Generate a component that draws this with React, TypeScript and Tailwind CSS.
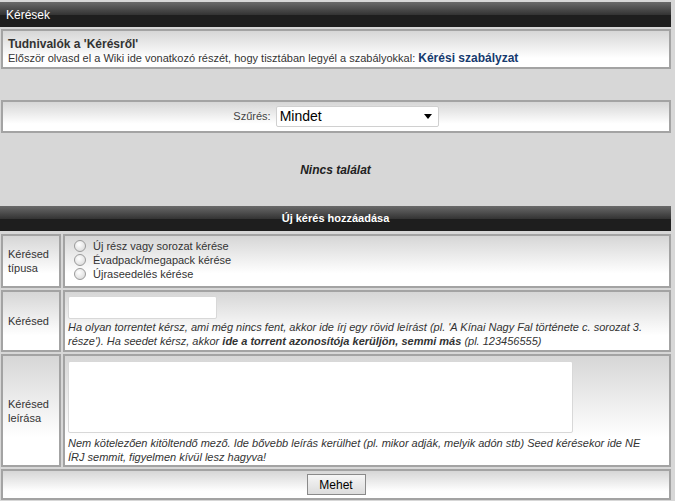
import React from "react";

const bar =
  "h-[25px] flex items-center text-white text-[11px] bg-[linear-gradient(to_bottom,#6a6a6a_0%,#4a4a4a_30%,#333_52%,#1e1e1e_52%,#1e1e1e_100%)]";
const box =
  "border-2 border-[#a3a3a3] bg-[linear-gradient(to_bottom,#d6d6d6_0%,#f4f4f4_55%,#ffffff_75%)]";

function Radio({ label }: { label: string }) {
  return (
    <label className="flex items-center h-[14px] gap-[7px]">
      <span className="w-[12px] h-[12px] rounded-full border border-[#9a9a9a] bg-[radial-gradient(circle_at_40%_35%,#ffffff,#d4d4d4)] inline-block" />
      <span>{label}</span>
    </label>
  );
}

export default function App() {
  return (
    <div
      className="w-[675px] h-[501px] overflow-hidden text-[11px] text-[#333] bg-[#d7d7d7]"
      style={{ fontFamily: '"Liberation Sans", Arial, sans-serif' }}
    >
      <div className="w-[671px] pt-[2px]">
        <div className={bar + " pl-[6px] text-[12px]"}>Kérések</div>
        <div className={box + " mt-[2px] ml-[1px] h-[40px] px-[5px] pt-[6px] leading-[14px]"}>
          <div className="font-bold text-[12px]">Tudnivalók a 'Kérésről'</div>
          <div>
            Először olvasd el a Wiki ide vonatkozó részét, hogy tisztában legyél a szabályokkal:{" "}
            <span className="font-bold text-[#163a6e] text-[12px]">Kérési szabályzat</span>
          </div>
        </div>

        <div className={box + " mt-[31px] ml-[1px] h-[33px] flex items-center justify-center gap-[5px]"}>
          <span className="text-[#444]">Szűrés:</span>
          <div className="w-[163px] h-[21px] bg-white border border-[#d0d0d0] rounded-[2px] flex items-center justify-between pl-[3px] pr-[6px] text-[14px] text-black">
            <span>Mindet</span>
            <span className="w-0 h-0 border-l-[4px] border-r-[4px] border-t-[5px] border-l-transparent border-r-transparent border-t-black" />
          </div>
        </div>

        <div className="h-[73px] flex items-center justify-center font-bold italic text-[#222] text-[12px]">
          Nincs találat
        </div>

        <div className={bar + " justify-center font-bold text-[11px]"}>Új kérés hozzáadása</div>

        <div className="mt-[3px] flex flex-col gap-[2px] pl-[1px]">
          <div className="flex gap-[2px] h-[54px]">
            <div className={box + " w-[60px] flex items-center pl-[5px] leading-[14px]"}>
              Kérésed
              <br />
              típusa
            </div>
            <div className={box + " flex-1 pl-[9px] pt-[3px]"}>
              <Radio label="Új rész vagy sorozat kérése" />
              <Radio label="Évadpack/megapack kérése" />
              <Radio label="Újraseedelés kérése" />
            </div>
          </div>

          <div className="flex gap-[2px] h-[62px]">
            <div className={box + " w-[60px] flex items-center pl-[5px]"}>Kérésed</div>
            <div className={box + " flex-1 pl-[3px] pt-[4px]"}>
              <div className="w-[149px] h-[23px] bg-white border border-[#d8d8d8] rounded-[2px]" />
              <div className="italic leading-[14px] mt-[1px]">
                Ha olyan torrentet kérsz, ami még nincs fent, akkor ide írj egy rövid leírást (pl. 'A Kínai Nagy Fal története c. sorozat 3.
                <br />
                része'). Ha seedet kérsz, akkor <span className="font-bold">ide a torrent azonosítója kerüljön, semmi más</span> (pl. 123456555)
              </div>
            </div>
          </div>

          <div className="flex gap-[2px] h-[113px]">
            <div className={box + " w-[60px] flex items-center pl-[5px] leading-[14px]"}>
              Kérésed
              <br />
              leírása
            </div>
            <div className={box + " flex-1 pl-[3px] pt-[5px]"}>
              <div className="w-[505px] h-[72px] bg-white border border-[#d8d8d8] rounded-[2px]" />
              <div className="italic leading-[14px] mt-[3px]">
                Nem kötelezően kitöltendő mező. Ide bővebb leírás kerülhet (pl. mikor adják, melyik adón stb) Seed kérésekor ide NE
                <br />
                ÍRJ semmit, figyelmen kívül lesz hagyva!
              </div>
            </div>
          </div>

          <div className={box + " h-[31px] flex items-center justify-center"}>
            <div className="w-[59px] h-[21px] border border-[#8a8a8a] bg-[linear-gradient(to_bottom,#f6f6f6,#dcdcdc)] flex items-center justify-center text-[12px] text-black">
              Mehet
            </div>
          </div>
        </div>
      </div>
    </div>
  );
}
